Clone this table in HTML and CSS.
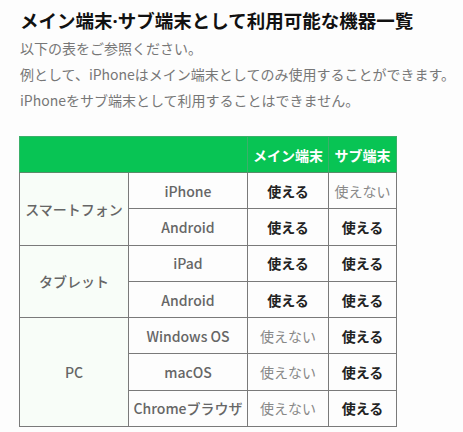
FILE: index.html
```html
<!DOCTYPE html>
<html lang="ja">
<head>
<meta charset="utf-8">
<link rel="stylesheet" href="styles.css">
</head>
<body>
<div class="page">
  <h1 class="title">メイン端末<span class="dot">·</span>サブ端末として利用可能な機器一覧</h1>
  <p class="lead">以下の表をご参照ください。<br>例として、iPhoneはメイン端末としてのみ使用することができます。<br>iPhoneをサブ端末として利用することはできません。</p>
  <table class="devices">
    <colgroup>
      <col class="c1"><col class="c2"><col class="c3"><col class="c4">
    </colgroup>
    <thead>
      <tr><th class="blank" colspan="2"></th><th>メイン端末</th><th>サブ端末</th></tr>
    </thead>
    <tbody>
      <tr><td class="cat" rowspan="2">スマートフォン</td><td class="dev">iPhone</td><td class="ok">使える</td><td class="ng">使えない</td></tr>
      <tr><td class="dev">Android</td><td class="ok">使える</td><td class="ok">使える</td></tr>
      <tr><td class="cat" rowspan="2">タブレット</td><td class="dev">iPad</td><td class="ok">使える</td><td class="ok">使える</td></tr>
      <tr><td class="dev">Android</td><td class="ok">使える</td><td class="ok">使える</td></tr>
      <tr><td class="cat" rowspan="3">PC</td><td class="dev">Windows OS</td><td class="ng">使えない</td><td class="ok">使える</td></tr>
      <tr><td class="dev">macOS</td><td class="ng">使えない</td><td class="ok">使える</td></tr>
      <tr><td class="dev">Chromeブラウザ</td><td class="ng">使えない</td><td class="ok">使える</td></tr>
    </tbody>
  </table>
</div>
</body>
</html>
```
FILE: styles.css
```css
html, body {
  margin: 0;
  padding: 0;
  background: #fdfdfd;
}
body {
  font-family: "Noto Sans CJK JP", "Noto Sans", sans-serif;
  color: #222;
}
.page {
  padding: 6px 0 0 20px;
}
.title {
  margin: 0;
  font-size: 18.5px;
  font-weight: 700;
  line-height: 28px;
  color: #111;
}
.title .dot {
  font-family: "Noto Sans", sans-serif;
}
.lead {
  margin: 0;
  font-size: 14px;
  line-height: 26px;
  color: #777;
}
.devices {
  margin: 23px 0 0 -1px;
  border-collapse: collapse;
  width: 377px;
  font-size: 14px;
  table-layout: fixed;
}
.c1 { width: 109px; }
.c2 { width: 119px; }
.c3 { width: 81px; }
.c4 { width: 68px; }
.devices th {
  background: #08c454;
  color: #fff;
  font-weight: 700;
  height: 35px;
  padding: 0;
  border: 1px solid #3bb06a;
  border-bottom: 1px solid #5a8a6a;
  text-align: center;
  white-space: nowrap;
}
.devices td {
  height: 35.3px;
  padding: 0;
  border: 1px solid #7a7a7a;
  text-align: center;
  white-space: nowrap;
  background: #fdfdfd;
}
.devices td.cat {
  background: #f8fdf8;
  color: #666;
  font-weight: 500;
}
.devices td.dev {
  color: #666;
  font-weight: 500;
}
.devices td.ok {
  color: #222;
  font-weight: 700;
}
.devices td.ng {
  color: #888;
  font-weight: 400;
}
```
